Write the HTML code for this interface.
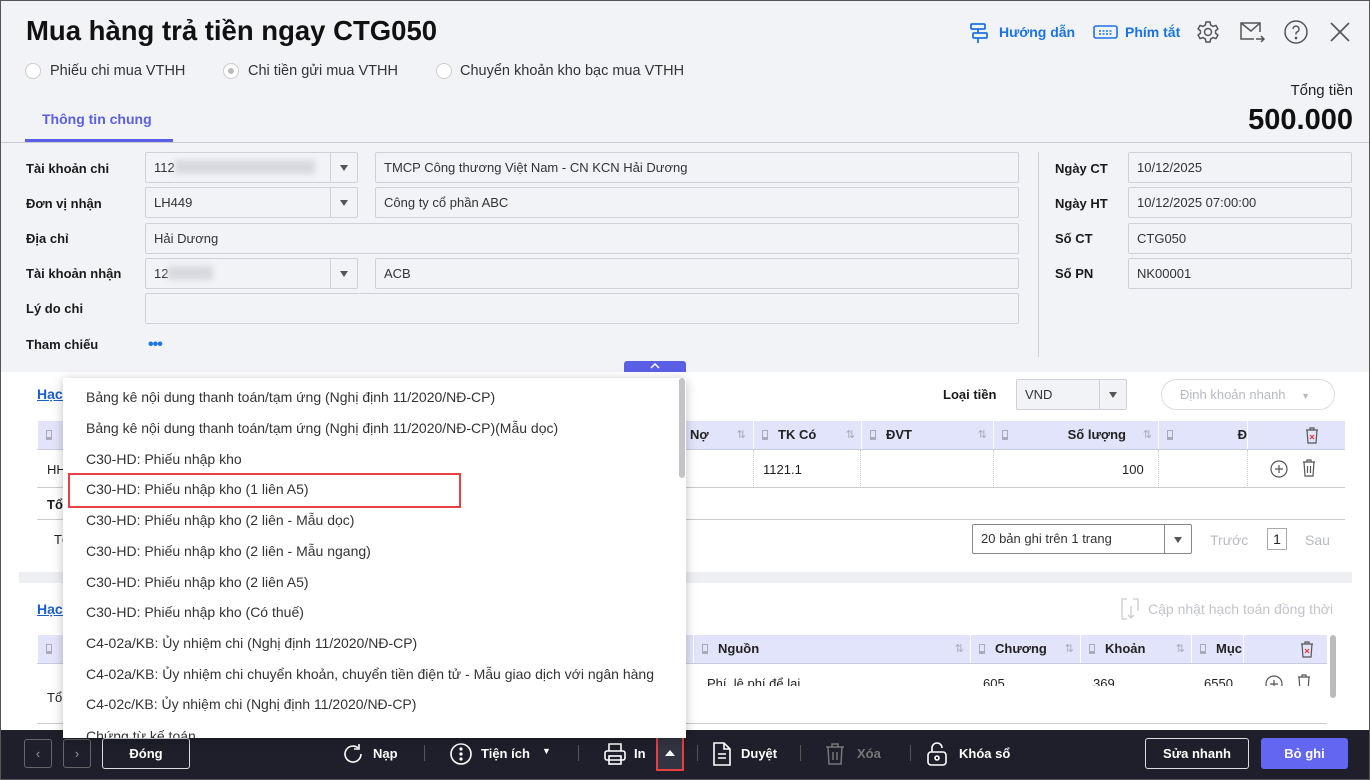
<!DOCTYPE html>
<html><head><meta charset="utf-8"><style>
*{box-sizing:border-box;margin:0;padding:0}
body{width:1370px;height:780px;overflow:hidden;font-family:"Liberation Sans","DejaVu Sans",sans-serif;font-size:13px;color:#222;position:relative;background:#f2f3f7}
.a{position:absolute;white-space:nowrap}
.lbl{font-weight:bold;font-size:13px;color:#1a1a1a}
.inp{position:absolute;border:1px solid #cfd1d8;border-radius:2px;background:#f2f3f7;height:31px;padding:0 8px;line-height:29px;font-size:13px;color:#333}
.dd{position:absolute;top:0;right:0;width:27px;height:29px;border-left:1px solid #cfd1d8}
.dd:after{content:"";position:absolute;left:9px;top:12px;border:4px solid transparent;border-top:6px solid #555}
.th{position:absolute;background:#e2e4fb;height:29px;border-bottom:1px solid #c9cbe0}
.hc{position:absolute;top:0;height:28px;line-height:28px;font-weight:bold;font-size:13px;padding-left:8px;border-left:1px solid #fff}
.pin{display:inline-block;width:6px;height:10px;border:1px solid #aab;border-bottom-width:3px;margin-right:10px;vertical-align:-1px}
.sort{position:absolute;right:6px;color:#aab;font-weight:normal;font-size:11px}
.mi{position:absolute;left:86px;font-size:14px;color:#333}
.bb{position:absolute;color:#fff;font-weight:bold;font-size:13px;line-height:16px}
.sep{position:absolute;top:745px;width:1px;height:16px;background:#555}
</style></head><body>
<div class="a" style="left:0;top:0;width:1370px;height:780px;border:1px solid #555;z-index:50;pointer-events:none"></div>
<div class="a" style="left:26px;top:15px;font-size:27.5px;font-weight:bold;color:#111">Mua hàng trả tiền ngay CTG050</div>
<!-- radios -->
<div class="a" style="left:25px;top:63px;width:16px;height:16px;border:1px solid #ccc;border-radius:50%;background:#fff"></div>
<div class="a" style="left:50px;top:63px;font-size:14.5px;color:#333">Phiếu chi mua VTHH</div>
<div class="a" style="left:223px;top:63px;width:16px;height:16px;border:1px solid #ccc;border-radius:50%;background:#fff"><div style="margin:4px;width:6px;height:6px;border-radius:50%;background:#bbb"></div></div>
<div class="a" style="left:248px;top:63px;font-size:14.5px;color:#333">Chi tiền gửi mua VTHH</div>
<div class="a" style="left:436px;top:63px;width:16px;height:16px;border:1px solid #ccc;border-radius:50%;background:#fff"></div>
<div class="a" style="left:460px;top:63px;font-size:14.5px;color:#333">Chuyển khoản kho bạc mua VTHH</div>
<!-- header right -->
<svg class="a" style="left:968px;top:22px" width="22" height="22" viewBox="0 0 22 22" fill="none" stroke="#1a73e8" stroke-width="1.8"><rect x="3" y="2" width="14" height="5" rx="1"/><rect x="5" y="11" width="14" height="5" rx="1"/><path d="M10 7v4M10 16v5"/></svg>
<div class="a" style="left:999px;top:24px;color:#1a73e8;font-size:14px;font-weight:bold">Hướng dẫn</div>
<svg class="a" style="left:1093px;top:25px" width="25" height="14" viewBox="0 0 25 14" fill="none" stroke="#1a73e8" stroke-width="1.6"><rect x="1" y="1" width="23" height="12" rx="2"/><path d="M6 6h13M6 9h13" stroke-dasharray="2 1.5"/></svg>
<div class="a" style="left:1125px;top:24px;color:#1a73e8;font-size:14px;font-weight:bold">Phím tắt</div>
<svg class="a" style="left:1196px;top:20px" width="24" height="24" viewBox="0 0 24 24" fill="none" stroke="#555" stroke-width="1.5"><circle cx="12" cy="12" r="3.5"/><path d="M10 2h4l.6 3 2.4 1.4 2.9-1 2 3.4-2.3 2v2.4l2.3 2-2 3.4-2.9-1L14.6 19 14 22h-4l-.6-3-2.4-1.4-2.9 1-2-3.4 2.3-2v-2.4l-2.3-2 2-3.4 2.9 1L9.4 5z"/></svg>
<svg class="a" style="left:1239px;top:21px" width="26" height="24" viewBox="0 0 26 24" fill="none" stroke="#555" stroke-width="1.5"><path d="M21 11V2H2v16h13"/><path d="M2 2l10 8 9-8"/><path d="M17 18h8M22 15l3 3-3 3"/></svg>
<svg class="a" style="left:1284px;top:20px" width="24" height="24" viewBox="0 0 24 24" fill="none" stroke="#555" stroke-width="1.5"><circle cx="12" cy="12" r="11"/><path d="M9 9a3 3 0 1 1 4 3c-1 .5-1 1-1 2.5"/><circle cx="12" cy="18" r=".6" fill="#555"/></svg>
<svg class="a" style="left:1330px;top:22px" width="20" height="20" viewBox="0 0 20 20" stroke="#555" stroke-width="1.6"><path d="M1 1l18 18M19 1L1 19"/></svg>
<div class="a" style="right:17px;top:82px;font-size:15px;color:#222">Tổng tiền</div>
<div class="a" style="right:17px;top:104px;font-size:29px;font-weight:bold;color:#111">500.000</div>
<!-- tabs -->
<div class="a" style="left:42px;top:111px;color:#5b5fe6;font-weight:bold;font-size:14px">Thông tin chung</div>
<div class="a" style="left:0;top:142px;width:1370px;height:1px;background:#c9cbd2"></div>
<div class="a" style="left:25px;top:139px;width:148px;height:3px;background:#5b5fe6"></div>
<!-- form -->
<div class="a lbl" style="left:26px;top:161px">Tài khoản chi</div>
<div class="a lbl" style="left:26px;top:196px">Đơn vị nhận</div>
<div class="a lbl" style="left:26px;top:231px">Địa chỉ</div>
<div class="a lbl" style="left:26px;top:266px">Tài khoản nhận</div>
<div class="a lbl" style="left:26px;top:301px">Lý do chi</div>
<div class="a lbl" style="left:26px;top:337px">Tham chiếu</div>
<div class="a" style="left:148px;top:336px;color:#1a73e8;font-weight:bold;font-size:16px;letter-spacing:-1px">•••</div>
<div class="inp" style="left:145px;top:152px;width:213px">112<span style="display:inline-block;width:140px;height:14px;background:#d8d9de;filter:blur(3px);vertical-align:-2px"></span><div class="dd"></div></div>
<div class="inp" style="left:375px;top:152px;width:644px">TMCP Công thương Việt Nam - CN KCN Hải Dương</div>
<div class="inp" style="left:145px;top:187px;width:213px">LH449<div class="dd"></div></div>
<div class="inp" style="left:375px;top:187px;width:644px">Công ty cổ phần ABC</div>
<div class="inp" style="left:145px;top:223px;width:874px">Hải Dương</div>
<div class="inp" style="left:145px;top:258px;width:213px">12<span style="display:inline-block;width:45px;height:14px;background:#d8d9de;filter:blur(3px);vertical-align:-2px"></span><div class="dd"></div></div>
<div class="inp" style="left:375px;top:258px;width:644px">ACB</div>
<div class="inp" style="left:145px;top:293px;width:874px"></div>
<div class="a" style="left:1038px;top:152px;width:1px;height:205px;background:#d0d2d8"></div>
<div class="a lbl" style="left:1055px;top:161px">Ngày CT</div>
<div class="a lbl" style="left:1055px;top:196px">Ngày HT</div>
<div class="a lbl" style="left:1055px;top:231px">Số CT</div>
<div class="a lbl" style="left:1055px;top:266px">Số PN</div>
<div class="inp" style="left:1128px;top:152px;width:224px">10/12/2025</div>
<div class="inp" style="left:1128px;top:187px;width:224px">10/12/2025 07:00:00</div>
<div class="inp" style="left:1128px;top:223px;width:224px">CTG050</div>
<div class="inp" style="left:1128px;top:258px;width:224px">NK00001</div>
<div class="a" style="left:624px;top:361px;width:62px;height:11px;background:#5b5fe6;border-radius:3px 3px 0 0"><svg style="position:absolute;left:26px;top:2px" width="10" height="6" viewBox="0 0 10 6" fill="none" stroke="#fff" stroke-width="1.5"><path d="M1 5l4-4 4 4"/></svg></div>
<!-- lower white -->
<div class="a" style="left:1px;top:372px;width:1368px;height:358px;background:#fff"></div>
<div class="a" style="left:37px;top:386px;color:#1a5fd0;text-decoration:underline;font-size:14px;font-weight:bold">Hạch toán</div>
<div class="a lbl" style="left:943px;top:387px">Loại tiền</div>
<div class="inp" style="left:1016px;top:379px;width:111px;height:31px;background:#f2f3f7">VND<div class="dd"></div></div>
<div class="a" style="left:1161px;top:379px;width:174px;height:31px;border:1px solid #dcdde2;border-radius:16px;color:#b8bac2;line-height:29px;padding-left:18px">Định khoản nhanh <span style="font-size:9px;margin-left:12px">▼</span></div>
<div class="th" style="left:37px;top:421px;width:1308px">
<div class="hc" style="left:0;width:40px"><span class="pin"></span></div>
<div class="hc" style="left:645px;width:70px;border:0">Nợ<span class="sort">⇅</span></div>
<div class="hc" style="left:716px;width:108px"><span class="pin"></span>TK Có<span class="sort">⇅</span></div>
<div class="hc" style="left:824px;width:132px"><span class="pin"></span>ĐVT<span class="sort">⇅</span></div>
<div class="hc" style="left:956px;width:165px"><span class="pin"></span><span style="position:absolute;right:32px">Số lượng</span><span class="sort">⇅</span></div>
<div class="hc" style="left:1121px;width:89px"><span class="pin"></span><span style="position:absolute;right:0">Đ</span></div>
<div class="hc" style="left:1210px;width:98px"><svg style="position:absolute;left:57px;top:6px" width="14" height="17" viewBox="0 0 14 17" fill="none" stroke="#555" stroke-width="1.2"><path d="M1 3h12M5 3V1h4v2M2 3l1 13h8l1-13"/><path d="M5 8l4 4M9 8l-4 4" stroke="#e33"/></svg></div>
</div>
<div class="a" style="left:37px;top:450px;width:1308px;height:38px;border-bottom:1px solid #ccc"></div>
<div class="a" style="left:753px;top:450px;width:1px;height:38px;border-left:1px dotted #ccc"></div>
<div class="a" style="left:860px;top:450px;width:1px;height:38px;border-left:1px dotted #ccc"></div>
<div class="a" style="left:993px;top:450px;width:1px;height:38px;border-left:1px dotted #ccc"></div>
<div class="a" style="left:1158px;top:450px;width:1px;height:38px;border-left:1px dotted #ccc"></div>
<div class="a" style="left:1247px;top:450px;width:1px;height:38px;border-left:1px dotted #ccc"></div>
<div class="a" style="left:47px;top:462px">HH</div>
<div class="a" style="left:763px;top:462px">1121.1</div>
<div class="a" style="left:1122px;top:462px">100</div>
<svg class="a" style="left:1270px;top:460px" width="18" height="18" viewBox="0 0 18 18" fill="none" stroke="#555" stroke-width="1.2"><circle cx="9" cy="9" r="8"/><path d="M9 5v8M5 9h8"/></svg>
<svg class="a" style="left:1302px;top:459px" width="14" height="18" viewBox="0 0 14 18" fill="none" stroke="#555" stroke-width="1.2"><path d="M1 3h12M5 3V1h4v2M2 3l1 14h8l1-14M5.5 7v7M8.5 7v7"/></svg>
<div class="a" style="left:37px;top:519px;width:1308px;height:1px;background:#ccc"></div>
<div class="a lbl" style="left:47px;top:497px">Tổng</div>
<div class="a" style="left:54px;top:532px">Tổng</div>
<div class="inp" style="left:972px;top:524px;width:220px;height:30px;background:#fff;border-color:#888;line-height:28px">20 bản ghi trên 1 trang<div class="dd" style="height:28px;border-color:#888"></div></div>
<div class="a" style="left:1210px;top:532px;color:#b8bac2;font-size:14px">Trước</div>
<div class="a" style="left:1267px;top:528px;width:20px;height:22px;border:1px solid #aaa;text-align:center;line-height:20px;font-size:14px">1</div>
<div class="a" style="left:1305px;top:532px;color:#b8bac2;font-size:14px">Sau</div>
<div class="a" style="left:19px;top:572px;width:1333px;height:11px;background:#eeeff2"></div>
<div class="a" style="left:37px;top:601px;color:#1a5fd0;text-decoration:underline;font-size:14px;font-weight:bold">Hạch toán</div>
<svg class="a" style="left:1121px;top:598px" width="18" height="22" viewBox="0 0 18 22" fill="none" stroke="#ccc" stroke-width="1.3"><path d="M6 1H1v20h5M12 1h5v12"/><path d="M10 8v12M7 17l3 3 3-3"/></svg>
<div class="a" style="left:1148px;top:601px;color:#c2c4cb;font-size:14px">Cập nhật hạch toán đồng thời</div>
<div class="th" style="left:37px;top:635px;width:1290px">
<div class="hc" style="left:0;width:40px"><span class="pin"></span></div>
<div class="hc" style="left:656px;width:277px"><span class="pin"></span>Nguồn<span class="sort">⇅</span></div>
<div class="hc" style="left:933px;width:110px"><span class="pin"></span>Chương<span class="sort">⇅</span></div>
<div class="hc" style="left:1043px;width:111px"><span class="pin"></span>Khoản<span class="sort">⇅</span></div>
<div class="hc" style="left:1154px;width:52px"><span class="pin"></span>Mục</div>
<div class="hc" style="left:1206px;width:84px"><svg style="position:absolute;left:56px;top:6px" width="14" height="17" viewBox="0 0 14 17" fill="none" stroke="#555" stroke-width="1.2"><path d="M1 3h12M5 3V1h4v2M2 3l1 13h8l1-13"/><path d="M5 8l4 4M9 8l-4 4" stroke="#e33"/></svg></div>
</div>
<div class="a" style="left:37px;top:665px;width:1290px;height:21px;overflow:hidden">
<div class="a" style="left:670px;top:11px">Phí, lệ phí để lại</div>
<div class="a" style="left:946px;top:11px">605</div>
<div class="a" style="left:1056px;top:11px">369</div>
<div class="a" style="left:1167px;top:11px">6550</div>
<svg class="a" style="left:1228px;top:10px" width="18" height="18" viewBox="0 0 18 18" fill="none" stroke="#555" stroke-width="1.2"><circle cx="9" cy="9" r="8"/><path d="M9 5v8M5 9h8"/></svg>
<svg class="a" style="left:1260px;top:9px" width="14" height="18" viewBox="0 0 14 18" fill="none" stroke="#555" stroke-width="1.2"><path d="M1 3h12M5 3V1h4v2M2 3l1 14h8l1-14"/></svg>
</div>
<div class="a" style="left:47px;top:690px">Tổng</div>
<div class="a" style="left:1330px;top:635px;width:6px;height:63px;background:#bbb;border-radius:3px"></div>
<div class="a" style="left:37px;top:723px;width:1290px;height:1px;background:#ccc"></div>
<!-- bottom bar -->
<div class="a" style="left:0;top:730px;width:1370px;height:50px;background:#1e1f2a;z-index:6">
<div class="a" style="left:24px;top:9px;width:28px;height:29px;border:1px solid #666;border-radius:3px;color:#999;text-align:center;line-height:27px">‹</div>
<div class="a" style="left:63px;top:9px;width:28px;height:29px;border:1px solid #666;border-radius:3px;color:#999;text-align:center;line-height:27px">›</div>
<div class="a" style="left:102px;top:8px;width:88px;height:31px;border:1px solid #ddd;border-radius:3px;color:#fff;font-weight:bold;text-align:center;line-height:29px">Đóng</div>
<svg class="a" style="left:341px;top:12px" width="24" height="24" viewBox="0 0 24 24" fill="none" stroke="#fff" stroke-width="1.6"><path d="M20 12a8 8 0 1 1-3-6.2"/><path d="M18 2v5h-5"/></svg>
<div class="bb" style="left:373px;top:16px">Nạp</div>
<div class="sep" style="left:424px;top:15px"></div>
<svg class="a" style="left:449px;top:12px" width="24" height="24" viewBox="0 0 24 24" fill="none" stroke="#fff" stroke-width="1.6"><circle cx="12" cy="12" r="10"/><circle cx="12" cy="7" r=".8" fill="#fff"/><circle cx="12" cy="12" r=".8" fill="#fff"/><circle cx="12" cy="17" r=".8" fill="#fff"/></svg>
<div class="bb" style="left:481px;top:16px">Tiện ích</div>
<div class="a" style="left:542px;top:16px;color:#fff;font-size:9px">▼</div>
<div class="sep" style="left:578px;top:15px"></div>
<svg class="a" style="left:603px;top:12px" width="24" height="24" viewBox="0 0 24 24" fill="none" stroke="#fff" stroke-width="1.6"><path d="M6 9V2h12v7"/><rect x="2" y="9" width="20" height="9" rx="2"/><rect x="6" y="14" width="12" height="8"/></svg>
<div class="bb" style="left:634px;top:16px">In</div>
<div class="a" style="left:656px;top:5px;width:28px;height:36px;border:2px solid #e8403f;background:#333443"><div style="position:absolute;left:7px;top:13px;border:5px solid transparent;border-bottom:6px solid #fff;border-top:0"></div></div>
<div class="sep" style="left:697px;top:15px"></div>
<svg class="a" style="left:711px;top:12px" width="22" height="24" viewBox="0 0 22 24" fill="none" stroke="#fff" stroke-width="1.6"><path d="M3 1h10l6 6v16H3z"/><path d="M13 1v6h6M7 12h8M7 16h8"/></svg>
<div class="bb" style="left:741px;top:16px">Duyệt</div>
<div class="sep" style="left:800px;top:15px"></div>
<svg class="a" style="left:825px;top:12px" width="20" height="24" viewBox="0 0 20 24" fill="none" stroke="#777" stroke-width="1.5"><path d="M1 5h18M7 5V2h6v3M3 5l1 17h12l1-17M8 10v8M12 10v8"/></svg>
<div class="bb" style="left:857px;top:16px;color:#777">Xóa</div>
<div class="sep" style="left:910px;top:15px"></div>
<svg class="a" style="left:926px;top:11px" width="22" height="26" viewBox="0 0 22 26" fill="none" stroke="#fff" stroke-width="1.6"><path d="M6 11V7a5 5 0 0 1 10 0"/><rect x="2" y="11" width="18" height="13" rx="3"/><circle cx="11" cy="17" r="2"/></svg>
<div class="bb" style="left:959px;top:16px">Khóa sổ</div>
<div class="a" style="left:1145px;top:8px;width:104px;height:31px;border:1px solid #ddd;border-radius:3px;color:#fff;font-weight:bold;text-align:center;line-height:29px">Sửa nhanh</div>
<div class="a" style="left:1261px;top:8px;width:87px;height:31px;background:#6366f1;border-radius:3px;color:#fff;font-weight:bold;text-align:center;line-height:31px">Bỏ ghi</div>
</div>
<!-- dropdown menu -->
<div class="a" style="left:63px;top:378px;width:623px;height:360px;background:#fff;box-shadow:0 2px 10px rgba(0,0,0,.25);overflow:hidden;z-index:7">
<div class="a" style="left:616px;top:0;width:6px;height:100px;background:#c4c4c8;border-radius:3px"></div>
<div class="mi" style="left:23px;top:11px">Bảng kê nội dung thanh toán/tạm ứng (Nghị định 11/2020/NĐ-CP)</div>
<div class="mi" style="left:23px;top:42px">Bảng kê nội dung thanh toán/tạm ứng (Nghị định 11/2020/NĐ-CP)(Mẫu dọc)</div>
<div class="mi" style="left:23px;top:73px">C30-HD: Phiếu nhập kho</div>
<div class="mi" style="left:23px;top:103px">C30-HD: Phiếu nhập kho (1 liên A5)</div>
<div class="mi" style="left:23px;top:134px">C30-HD: Phiếu nhập kho (2 liên - Mẫu dọc)</div>
<div class="mi" style="left:23px;top:165px">C30-HD: Phiếu nhập kho (2 liên - Mẫu ngang)</div>
<div class="mi" style="left:23px;top:196px">C30-HD: Phiếu nhập kho (2 liên A5)</div>
<div class="mi" style="left:23px;top:226px">C30-HD: Phiếu nhập kho (Có thuế)</div>
<div class="mi" style="left:23px;top:257px">C4-02a/KB: Ủy nhiệm chi (Nghị định 11/2020/NĐ-CP)</div>
<div class="mi" style="left:23px;top:288px">C4-02a/KB: Ủy nhiệm chi chuyển khoản, chuyển tiền điện tử - Mẫu giao dịch với ngân hàng</div>
<div class="mi" style="left:23px;top:318px">C4-02c/KB: Ủy nhiệm chi (Nghị định 11/2020/NĐ-CP)</div>
<div class="mi" style="left:23px;top:350px">Chứng từ kế toán</div>
<div class="a" style="left:5px;top:95px;width:393px;height:35px;border:2px solid #e8403f"></div>
</div>
</body></html>
